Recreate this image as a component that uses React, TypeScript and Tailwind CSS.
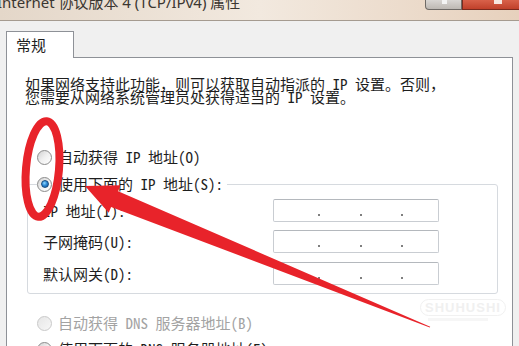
import React from "react";

function Radio({ checked = false, disabled = false }: { checked?: boolean; disabled?: boolean }) {
  return (
    <div
      className={
        "w-[15px] h-[15px] shrink-0 rounded-full border flex items-center justify-center " +
        (disabled
          ? "border-[#c9c9c9] bg-gradient-to-br from-[#e6e6e6] to-[#f7f7f7]"
          : "border-[#8b8b8b] bg-gradient-to-br from-[#d2d2d2] via-[#f0f0f0] to-[#ffffff]")
      }
    >
      {checked && (
        <div className="w-[8px] h-[8px] rounded-full border border-[#1a4d7e] bg-[radial-gradient(circle_at_40%_35%,#8fd8ff_0%,#2f8ad6_45%,#0b4f96_100%)]" />
      )}
    </div>
  );
}

function IpBox() {
  return (
    <div className="w-[166px] h-[23px] border border-[#c9cdd2] border-t-[#b4b8bd] rounded-[2px] bg-white flex items-end pb-[5px]">
      <span className="w-[44px]" />
      <span className="w-[2px] h-[2px] bg-[#555] rounded-full" />
      <span className="w-[40px]" />
      <span className="w-[2px] h-[2px] bg-[#555] rounded-full" />
      <span className="w-[39px]" />
      <span className="w-[2px] h-[2px] bg-[#555] rounded-full" />
    </div>
  );
}

function Row({ label, className = "" }: { label: string; className?: string }) {
  return (
    <div className={"flex items-center h-[23px] " + className}>
      <div className="w-[230px] whitespace-nowrap leading-[20px]">{label}</div>
      <IpBox />
    </div>
  );
}

export default function App() {
  return (
    <div className="relative w-[519px] h-[346px] overflow-hidden bg-[#f0f0f0] font-['Noto_Sans_Mono_CJK_SC','Noto_Sans_CJK_SC',sans-serif] text-[15px] text-[#1e1e1e]">
      {/* title bar */}
      <div className="h-[21px] flex items-start border-b border-[#a59b90] bg-gradient-to-r from-[#e4d7c9] via-[#f2e9df] to-[#e7d1bd]">
        <div className="-ml-[3px] -mt-[8px] text-[15px] leading-[20px] text-[#3b3631] whitespace-nowrap font-['Noto_Sans','Noto_Sans_CJK_SC',sans-serif]">
          Internet 协议版本 4 (TCP/IPv4) 属性
        </div>
        <div className="ml-auto flex">
          <div className="w-[37px] h-[10px] rounded-bl-[4px] border border-t-0 border-[#6e6a66] bg-gradient-to-b from-[#d9d6d3] to-[#bdb8b3] flex justify-center">
            <div className="w-[5px] h-[4px] bg-[#f4f4f4] ml-[2px]" />
          </div>
          <div className="w-[57px] h-[10px] border border-t-0 border-r-0 border-[#7a2a1e] bg-gradient-to-b from-[#d8614a] to-[#c0402a] flex justify-center">
            <div className="w-[8px] h-[4px] bg-[#f7e6e0] ml-[14px]" />
          </div>
        </div>
      </div>

      {/* body */}
      <div className="px-[6px] pt-[10px]">
        {/* tab */}
        <div className="relative z-10 w-[68px] h-[27px] -mb-px border border-b-0 border-[#8e9197] bg-white flex items-center pl-[9px] pt-[1px] font-['Noto_Sans_CJK_SC',sans-serif]">
          常规
        </div>
        {/* panel */}
        <div className="h-[300px] border border-[#8e9197] bg-white">
          <p className="ml-[18px] pt-[19px] leading-[13px] whitespace-nowrap">
            如果网络支持此功能，则可以获取自动指派的 IP 设置。否则，
            <br />
            您需要从网络系统管理员处获得适当的 IP 设置。
          </p>

          <div className="ml-[30px] mt-[44px] h-[20px] flex items-center gap-[6px] whitespace-nowrap">
            <Radio />
            <span>自动获得 IP 地址(O)</span>
          </div>

          <fieldset className="ml-[20px] mt-[7px] w-[471px] border border-[#d6dadf] rounded-[3px] pl-[15px] pt-[5px] pb-[8px]">
            <legend className="-ml-[6px] pr-[4px]">
              <div className="h-[20px] flex items-center gap-[6px] whitespace-nowrap">
                <Radio checked />
                <span>使用下面的 IP 地址(S):</span>
              </div>
            </legend>
            <Row label="IP 地址(I):" />
            <Row label="子网掩码(U):" className="mt-[8px]" />
            <Row label="默认网关(D):" className="mt-[9px]" />
          </fieldset>

          <div className="ml-[30px] mt-[19px] h-[20px] flex items-center gap-[6px] whitespace-nowrap text-[#a3a3a3]">
            <Radio disabled />
            <span>自动获得 DNS 服务器地址(B)</span>
          </div>
          <div className="ml-[30px] mt-[6px] h-[20px] flex items-center gap-[6px] whitespace-nowrap">
            <Radio />
            <span>使用下面的 DNS 服务器地址(E):</span>
          </div>
        </div>
      </div>

      {/* watermark */}
      <div className="absolute left-[420px] top-[299px] px-[4px] rounded-full border border-[#f1f1f1] text-[13px] leading-[15px] font-bold tracking-[1px] text-[#f0f0f0] font-['Liberation_Sans',sans-serif]">
        SHUHUSHI
      </div>
      <div className="absolute left-[428px] top-[318px] w-[60px] h-[3px] bg-[#f6f6f6]" />

      {/* red annotations */}
      <svg className="absolute inset-0 pointer-events-none" width="519" height="346" viewBox="0 0 519 346">
        <ellipse
          cx="42.5"
          cy="169"
          rx="16.5"
          ry="48"
          fill="none"
          stroke="#e8232a"
          strokeWidth="8"
          transform="rotate(5 42.5 169)"
        />
        <polygon
          fill="#e8232a"
          points="85,186 120.5,185.2 118.1,191.2 430.2,326.8 429.8,327.5 111.1,206.9 108.7,212.8"
        />
      </svg>
    </div>
  );
}
